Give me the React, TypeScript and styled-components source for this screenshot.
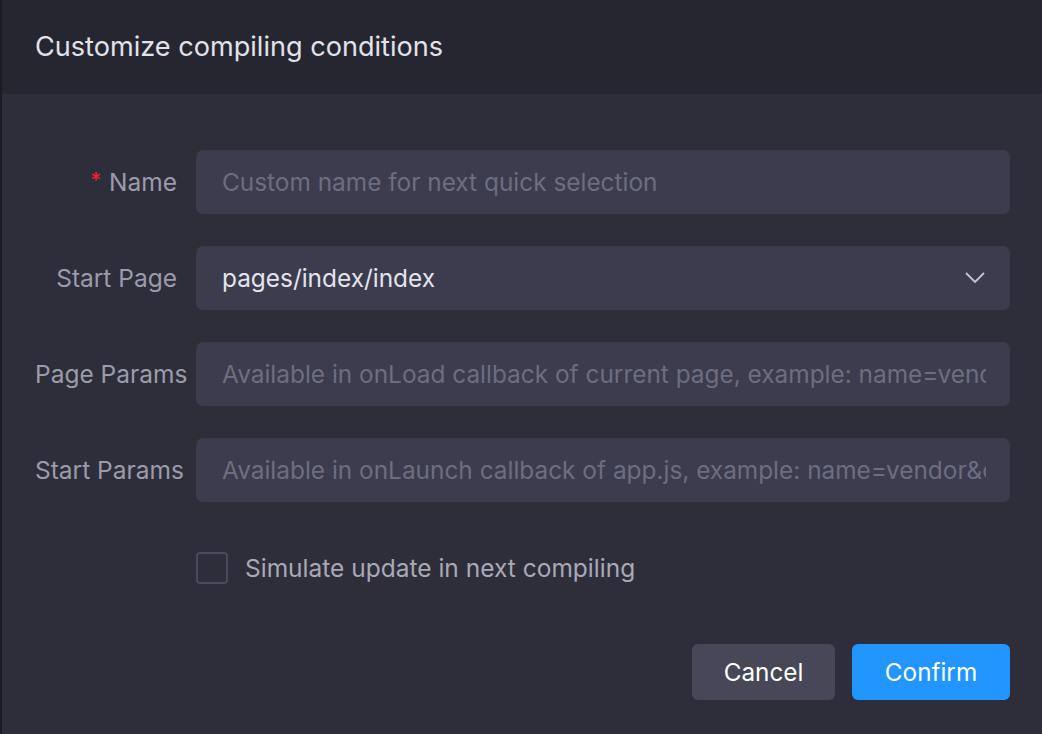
import React from "react";
import styled, { createGlobalStyle } from "styled-components";

const Global = createGlobalStyle`
  html, body { margin: 0; padding: 0; background: #2e2e3b; }
  body { font-family: Inter, "Noto Sans", sans-serif; }
  * { box-sizing: border-box; }
`;

const Dialog = styled.div`
  width: 1042px;
  height: 734px;
  background: #2e2e3b;
  border-left: 2px solid #1b1b22;
  display: flex;
  flex-direction: column;
`;

const Header = styled.div`
  height: 94px;
  background: #262631;
  display: flex;
  align-items: center;
  padding-left: 33px;
  padding-bottom: 2px;
`;

const Title = styled.h1`
  margin: 0;
  font-size: 27.1px;
  font-weight: 400;
  color: #e2e2ea;
`;

const Form = styled.div`
  display: flex;
  flex-direction: column;
  gap: 32px;
  padding: 56px 32px 0 33px;
`;

const Row = styled.div`
  display: grid;
  grid-template-columns: 142px 1fr;
  column-gap: 19px;
  align-items: center;
`;

const Label = styled.label`
  text-align: right;
  font-size: 24.5px;
  color: #9b9baa;
  white-space: nowrap;
`;

const Star = styled.span`
  color: #f5222d;
  margin-right: 8px;
  font-size: 21px;
  position: relative;
  top: -3px;
`;

const Input = styled.input`
  height: 64px;
  width: 100%;
  border: none;
  outline: none;
  border-radius: 7px;
  background: #3c3c4e;
  padding: 0 24px 0 26px;
  font-family: inherit;
  font-size: 24.4px;
  color: #e4e4ec;
  &::placeholder { color: #6d6d80; }
`;

const Select = styled.div`
  height: 64px;
  border-radius: 7px;
  background: #3c3c4e;
  padding: 0 24px 0 26px;
  display: flex;
  align-items: center;
  justify-content: space-between;
  font-size: 24.4px;
  color: #e4e4ec;
`;

const CheckRow = styled.div`
  display: flex;
  align-items: center;
  gap: 17px;
  padding-left: 194px;
  margin-top: 50px;
`;

const Box = styled.span`
  width: 32px;
  height: 32px;
  border: 2px solid #4b4b5c;
  border-radius: 4px;
`;

const CheckText = styled.span`
  font-size: 24.5px;
  color: #a9a9b6;
`;

const Footer = styled.div`
  display: flex;
  justify-content: flex-end;
  gap: 17px;
  padding: 60px 32px 0 0;
`;

const Button = styled.button<{ $primary?: boolean }>`
  height: 56px;
  border: none;
  border-radius: 6px;
  padding: 0 30px;
  min-width: ${(p) => (p.$primary ? "158px" : "143px")};
  font-family: inherit;
  font-size: 24.3px;
  color: #ffffff;
  background: ${(p) => (p.$primary ? "#2295ff" : "#474757")};
`;

export default function App() {
  return (
    <>
      <Global />
      <Dialog>
        <Header>
          <Title>Customize compiling conditions</Title>
        </Header>
        <Form>
          <Row>
            <Label><Star>*</Star>Name</Label>
            <Input placeholder="Custom name for next quick selection" />
          </Row>
          <Row>
            <Label>Start Page</Label>
            <Select>
              <span>pages/index/index</span>
              <svg width="22" height="14" viewBox="0 0 22 14" fill="none">
                <path d="M2 2 L11 11 L20 2" stroke="#c4c4d0" strokeWidth="1.8" />
              </svg>
            </Select>
          </Row>
          <Row>
            <Label>Page Params</Label>
            <Input placeholder="Available in onLoad callback of current page, example: name=vendor&color=black" />
          </Row>
          <Row>
            <Label>Start Params</Label>
            <Input placeholder="Available in onLaunch callback of app.js, example: name=vendor&color=black" />
          </Row>
        </Form>
        <CheckRow>
          <Box />
          <CheckText>Simulate update in next compiling</CheckText>
        </CheckRow>
        <Footer>
          <Button>Cancel</Button>
          <Button $primary>Confirm</Button>
        </Footer>
      </Dialog>
    </>
  );
}
